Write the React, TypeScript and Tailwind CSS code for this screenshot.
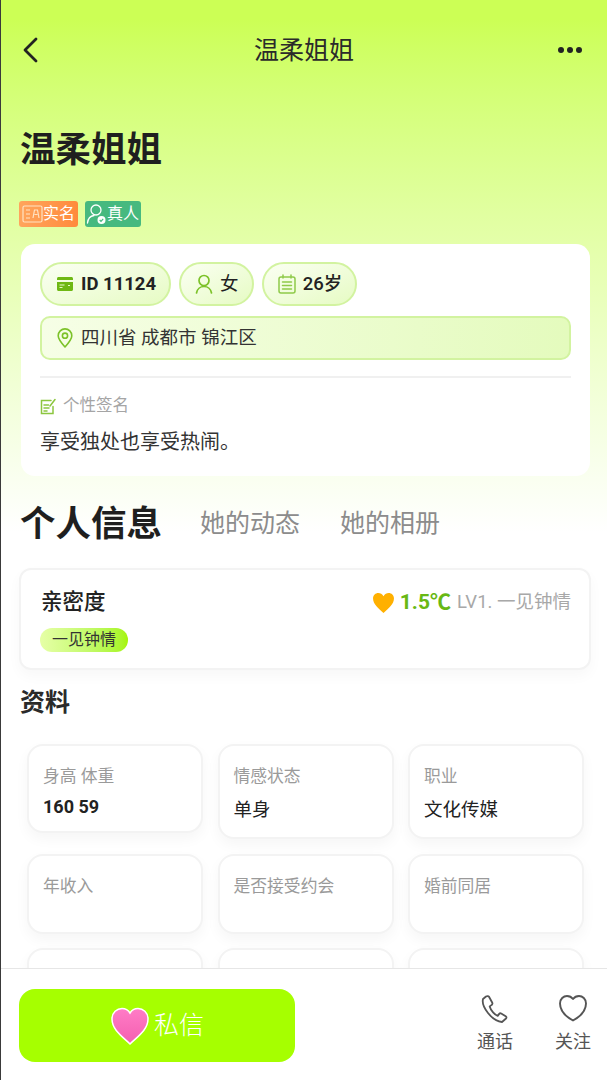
import React from "react";

const fontStack = "font-['Roboto','Noto_Sans_CJK_SC',sans-serif]";

const IdIcon = () => (
  <svg width="18" height="16" viewBox="0 0 18 16" fill="none">
    <path d="M1 2.500C1 1.700 1.700 1 2.500 1h13c.8 0 1.500.7 1.500 1.500V4H1V2.500z" fill="#6fb814" />
    <path d="M1 6h16v7.500c0 .8-.7 1.500-1.500 1.500h-13C1.700 15 1 14.300 1 13.500V6z" fill="#6fb814" />
    <path d="M3.500 9h5M3.500 11.500h3M12 9.500h2" stroke="#e9fbc8" strokeWidth="1.200" />
  </svg>
);

const UserIcon = () => (
  <svg width="18" height="20" viewBox="0 0 18 20" fill="none" stroke="#7cc229" strokeWidth="1.700" strokeLinecap="round">
    <circle cx="9" cy="6.500" r="5" />
    <path d="M1.500 19c.6-3.800 3.700-6.500 7.500-6.500s6.900 2.700 7.500 6.500" />
  </svg>
);

const CalendarIcon = () => (
  <svg width="18" height="20" viewBox="0 0 18 20" fill="none" stroke="#8fca4a" strokeWidth="1.500" strokeLinecap="round">
    <rect x="1" y="3" width="16" height="16" rx="2" />
    <path d="M5 1v3M13 1v3M4.500 8h9M4.500 11.500h9M4.500 15h9" />
  </svg>
);

const PinIcon = () => (
  <svg width="16" height="20" viewBox="0 0 16 20" fill="none" stroke="#7cc229" strokeWidth="1.600">
    <path d="M8 19C4 14.500 1.200 11.300 1.200 7.700a6.800 6.800 0 0 1 13.600 0C14.800 11.300 12 14.500 8 19z" strokeLinejoin="round" />
    <circle cx="8" cy="7.700" r="2.600" />
  </svg>
);

const NoteIcon = () => (
  <svg width="16" height="17" viewBox="0 0 16 17" fill="none" stroke="#8cc63f" strokeWidth="1.500" strokeLinecap="round">
    <path d="M11 2.500H1.500v13h11.500V8.500" />
    <path d="M4 7h4.500M4 10h5M4 13h3M10 8 15 1.500" />
  </svg>
);

const RealNameIcon = () => (
  <svg width="21" height="18" viewBox="0 0 21 18" fill="none" stroke="#ffe3c4" strokeWidth="1.200">
    <rect x="1" y="1" width="19" height="16" rx="1.500" />
    <path d="M4 5h4M4 9h4M4 13h4M11 13l1.500-8h3l1.500 8M12.500 9.500h3" />
  </svg>
);

const RealPersonIcon = () => (
  <svg width="21" height="22" viewBox="0 0 21 22" fill="none">
    <circle cx="10" cy="7" r="5" stroke="#fff" strokeWidth="1.300" />
    <path d="M1.500 20c.4-4 3-7 6.500-7.500" stroke="#fff" strokeWidth="1.300" strokeLinecap="round" />
    <circle cx="15.500" cy="17" r="4" fill="#fff" />
    <path d="M13.700 17l1.300 1.300 2.200-2.400" stroke="#46b97f" strokeWidth="1.200" />
  </svg>
);

const Chip = ({ children }: { children: React.ReactNode }) => (
  <div className="flex h-[44px] items-center gap-[7px] rounded-full border-2 border-[#d2f3a0] bg-gradient-to-br from-[#fbfff3] to-[#e6fbc3] pl-[14px] pr-[13px] text-[18.5px] leading-none text-[#222]">
    {children}
  </div>
);

const InfoCard = ({ label, value, bold, height }: { label: string; value?: string; bold?: boolean; height: string }) => (
  <div className={`${height} rounded-[16px] border-2 border-[#f3f3f3] bg-white pl-[14px] pt-[19px] shadow-[0_6px_14px_rgba(0,0,0,0.04)]`}>
    <div className="text-[16.8px] leading-[22px] text-[#9a9a9a]">{label}</div>
    {value && (
      <div className={bold ? "mt-[8px] text-[18px] font-bold leading-[24px] text-[#222]" : "mt-[10px] text-[18.5px] font-normal leading-[26px] text-[#222]"}>
        {value}
      </div>
    )}
  </div>
);

export default function App() {
  return (
    <div className={`${fontStack} flex h-[1080px] w-[607px] flex-col overflow-hidden border-l border-[#3a3a3a] bg-white`}>
      <main className="min-h-0 flex-1 overflow-hidden bg-gradient-to-b from-[#ccff55] from-[2%] via-[#e3ffa6] via-[24%] to-white to-[55%]">
        <header className="flex h-[100px] items-center justify-between pl-[20px] pr-[25px]">
          <div className="w-[29px]">
            <svg width="20" height="28" viewBox="0 0 20 28" fill="none" stroke="#222" strokeWidth="2.800" strokeLinecap="round" strokeLinejoin="round">
              <path d="M15 3 4 14l11 11" />
            </svg>
          </div>
          <h2 className="text-[25px] font-normal leading-none text-[#2a2a2a]">温柔姐姐</h2>
          <div className="flex gap-[3px]">
            <span className="size-[6px] rounded-full bg-[#222]" />
            <span className="size-[6px] rounded-full bg-[#222]" />
            <span className="size-[6px] rounded-full bg-[#222]" />
          </div>
        </header>

        <h1 className="ml-[19px] mt-[26px] text-[35.5px] font-bold leading-[48px] text-[#1f1f1f]">温柔姐姐</h1>

        <div className="ml-[18px] mt-[27px] flex gap-[7px]">
          <div className="flex h-[26px] w-[59px] items-center rounded-[3px] bg-gradient-to-r from-[#ffa55c] to-[#ff8a3c] pl-[3px] text-[16px] leading-none text-white">
            <RealNameIcon />
            实名
          </div>
          <div className="flex h-[26px] w-[56px] items-center rounded-[3px] bg-[#46b97f] pl-[1px] text-[16px] leading-none text-white">
            <RealPersonIcon />
            真人
          </div>
        </div>

        <section className="ml-[20px] mt-[17px] h-[232px] w-[569px] rounded-[14px] bg-white px-[19px] pt-[18px]">
          <div className="flex gap-[8px]">
            <Chip>
              <IdIcon />
              <span className="font-bold">ID 11124</span>
            </Chip>
            <Chip>
              <UserIcon />
              <span>女</span>
            </Chip>
            <Chip>
              <CalendarIcon />
              <span className="font-medium">26岁</span>
            </Chip>
          </div>
          <div className="mt-[10px] flex h-[44px] items-center gap-[8px] rounded-[10px] border-2 border-[#d2f3a0] bg-gradient-to-r from-[#f6fee6] to-[#e4fbbd] pl-[15px] text-[18.5px] leading-none text-[#333]">
            <PinIcon />
            四川省 成都市 锦江区
          </div>
          <div className="mt-[16px] h-[2px] bg-[#f0f0f0]" />
          <div className="mt-[17px] flex items-center gap-[7px] text-[16.5px] leading-[22px] text-[#a5a5a5]">
            <NoteIcon />
            个性签名
          </div>
          <p className="mt-[12px] text-[20px] leading-[26px] text-[#333]">享受独处也享受热闹。</p>
        </section>

        <nav className="ml-[19px] mt-[24px] flex items-center">
          <span className="text-[35.5px] font-bold leading-[48px] text-[#1f1f1f]">个人信息</span>
          <span className="ml-[38px] text-[25px] leading-[48px] text-[#8c8c8c]">她的动态</span>
          <span className="ml-[40px] text-[25px] leading-[48px] text-[#8c8c8c]">她的相册</span>
        </nav>

        <section className="ml-[18px] mt-[20px] h-[102px] w-[572px] rounded-[12px] border-2 border-[#f3f3f3] bg-white pl-[20px] pr-[18px] pt-[17px] shadow-[0_6px_14px_rgba(0,0,0,0.03)]">
          <div className="flex items-center justify-between">
            <span className="text-[21.500px] font-medium leading-[30px] text-[#222]">亲密度</span>
            <div className="flex items-center">
              <svg width="23" height="21" viewBox="0 0 22 20" fill="#ffb000">
                <path d="M11 20C6 15.500 1 11.500 1 6.200 1 3 3.400 1 6 1c2 0 3.800 1 5 3 1.200-2 3-3 5-3 2.600 0 5 2 5 5.200C21 11.500 16 15.500 11 20z" />
              </svg>
              <span className="ml-[5px] text-[21px] font-bold leading-none text-[#68b814]">1.5℃</span>
              <span className="ml-[6px] text-[18.5px] leading-none text-[#a8a8a8]">LV1. 一见钟情</span>
            </div>
          </div>
          <div className="-ml-[1px] mt-[11px] flex h-[24px] w-[88px] items-center justify-center rounded-full bg-gradient-to-r from-[#e6ffa6] to-[#a6f500] text-[16px] leading-none text-[#333]">
            一见钟情
          </div>
        </section>

        <h3 className="ml-[19px] mt-[15px] text-[25px] font-semibold leading-[36px] text-[#2a2a2a]">资料</h3>

        <div className="ml-[26px] mt-[23px] grid w-[558px] grid-cols-[176px_176px_176px] items-start gap-x-[14.500px]">
          <InfoCard label="身高 体重" value="160 59" bold height="h-[89px]" />
          <InfoCard label="情感状态" value="单身" height="h-[95px]" />
          <InfoCard label="职业" value="文化传媒" height="h-[95px]" />
        </div>
        <div className="ml-[26px] mt-[15px] grid w-[558px] grid-cols-[176px_176px_176px] gap-x-[14.500px]">
          <InfoCard label="年收入" height="h-[80px]" />
          <InfoCard label="是否接受约会" height="h-[80px]" />
          <InfoCard label="婚前同居" height="h-[80px]" />
        </div>
        <div className="ml-[26px] mt-[14px] grid w-[558px] grid-cols-[176px_176px_176px] gap-x-[14.500px]">
          <InfoCard label="" height="h-[80px]" />
          <InfoCard label="" height="h-[80px]" />
          <InfoCard label="" height="h-[80px]" />
        </div>
      </main>

      <footer className="flex h-[112px] shrink-0 items-start border-t border-[#e6e6e6] bg-white pl-[18px] pt-[20px]">
        <button className="flex h-[73px] w-[276px] items-center justify-center gap-[4px] rounded-[16px] bg-[#a6ff00] text-[25px] font-light text-white">
          <svg width="40" height="38" viewBox="0 0 40 38">
            <defs>
              <linearGradient id="heartFill" x1="0" y1="0" x2="0" y2="1">
                <stop offset="0" stopColor="#ff7cc6" />
                <stop offset="1" stopColor="#f45fb0" />
              </linearGradient>
            </defs>
            <path d="M20 37C13 30 2 23 2 12 2 5.500 7 1.500 12 1.500c3.500 0 6.300 1.700 8 4.500 1.700-2.800 4.500-4.500 8-4.500 5 0 10 4 10 10.500C38 23 27 30 20 37z" fill="url(#heartFill)" stroke="#fff" strokeWidth="1.500" />
          </svg>
          私信
        </button>
        <div className="ml-[181px] mt-[5px] flex w-[38px] flex-col items-center">
          <svg width="28" height="30" viewBox="0 0 28 30" fill="none" stroke="#555" strokeWidth="1.800" strokeLinejoin="round">
            <path d="M5 2.500 2 5c-1 4 1 9 5 14 4 5 9 8.500 14 9l4-3.500c.8-.8.5-1.800-.3-2.300l-4.500-2.700c-.8-.4-1.500-.2-2 .4l-1.500 2c-3-1-6.700-5-8-9.500l2-1.500c.7-.5.900-1.300.6-2.100L8 2.800c-.5-.9-2-1-3-.3z" />
          </svg>
          <span className="mt-[5px] whitespace-nowrap text-[18px] leading-[26px] text-[#555]">通话</span>
        </div>
        <div className="ml-[40px] mt-[5px] flex w-[38px] flex-col items-center">
          <svg width="30" height="28" viewBox="0 0 30 28" fill="none" stroke="#555" strokeWidth="1.900" strokeLinejoin="round">
            <path d="M15 26.500C9.500 23.500 2 17.500 2 9.500 2 4.800 5.500 2 9 2c2.500 0 4.500 1 6 3 1.500-2 3.500-3 6-3 3.500 0 7 2.800 7 7.500 0 8-7.500 14-13 17z" />
          </svg>
          <span className="mt-[7px] whitespace-nowrap text-[18px] leading-[26px] text-[#555]">关注</span>
        </div>
      </footer>
    </div>
  );
}
